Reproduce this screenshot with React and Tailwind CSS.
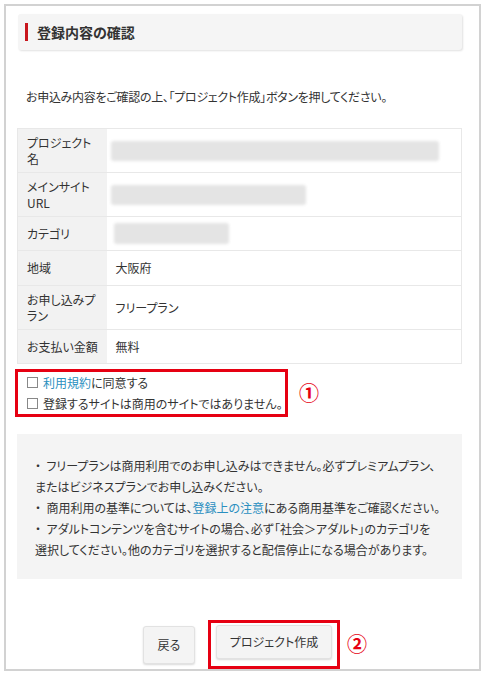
import { useState } from "react";

const rows = [
  { label: ["プロジェクト", "名"], h: "h-[44px]", blur: "w-[328px] h-[20px] -ml-[5px]" },
  { label: ["メインサイト", "URL"], h: "h-[44px]", blur: "w-[195px] h-[20px] -ml-[5px]" },
  { label: ["カテゴリ"], h: "h-[34px]", blur: "w-[115px] h-[21px] -ml-[2px]" },
  { label: ["地域"], h: "h-[35px]", value: "大阪府" },
  { label: ["お申し込みプ", "ラン"], h: "h-[44px]", value: "フリープラン" },
  { label: ["お支払い金額"], h: "h-[34px]", value: "無料" },
];

export default function App() {
  const [agree, setAgree] = useState(false);
  const [notCommercial, setNotCommercial] = useState(false);

  return (
    <div className="min-h-screen bg-white pl-[4px] pt-[4px] text-[#333] font-['Noto_Sans_CJK_JP','Noto_Sans',sans-serif] [font-feature-settings:'palt']">
      <div className="w-[477px] border-2 border-[#d2d2d2] pl-[12px] pr-[17px] pt-[8px]">
        {/* heading */}
        <div className="h-[36px] flex items-center rounded-[3px] bg-[#f5f5f5] shadow-[1px_1px_2px_rgba(0,0,0,0.12)]">
          <span className="ml-[7px] w-[3px] h-[18px] bg-[#c8161d]" />
          <h2 className="ml-[9px] text-[14px] font-bold leading-none">登録内容の確認</h2>
        </div>

        <p className="mt-[38px] text-[12px] tracking-[-0.3px] leading-[18px] pl-[8px]">
          お申込み内容をご確認の上、「プロジェクト作成」ボタンを押してください。
        </p>

        {/* summary table */}
        <table className="mt-[22px] w-[445px] ml-[-1px] border-collapse text-[12px]">
          <tbody>
            {rows.map((r) => (
              <tr key={r.label.join("")} className={`${r.h} border border-[#e8e8e8]`}>
                <td className="w-[89px] bg-[#f2f2f2] pl-[9px] whitespace-nowrap leading-[16px] align-middle">
                  {r.label.map((l, i) => (
                    <div key={i}>{l}</div>
                  ))}
                </td>
                <td className="px-[9px] align-middle">
                  {r.value ? (
                    r.value
                  ) : (
                    <div className={`${r.blur} rounded-[3px] bg-[#e4e4e4] blur-[1.5px]`} />
                  )}
                </td>
              </tr>
            ))}
          </tbody>
        </table>

        {/* agreement checks */}
        <div className="flex items-center mt-[5px] ml-[-3px]">
          <div className="w-[273px] h-[48px] border-[3px] border-[#e60012] pl-[9px] flex flex-col justify-center gap-[6px] text-[12px] leading-[15px]">
            <label className="flex items-center gap-[5px]">
              <input
                type="checkbox"
                checked={agree}
                onChange={(e) => setAgree(e.target.checked)}
                className="appearance-none w-[11px] h-[11px] border border-[#888] bg-white"
              />
              <span>
                <span className="text-[#2a8fc0]">利用規約</span>に同意する
              </span>
            </label>
            <label className="flex items-center gap-[5px]">
              <input
                type="checkbox"
                checked={notCommercial}
                onChange={(e) => setNotCommercial(e.target.checked)}
                className="appearance-none w-[11px] h-[11px] border border-[#888] bg-white"
              />
              <span>登録するサイトは商用のサイトではありません。</span>
            </label>
          </div>
          <span className="ml-[11px] text-[#e60012] text-[20px] font-bold leading-none">①</span>
        </div>

        {/* notes */}
        <div className="mt-[17px] w-[445px] ml-[-1px] bg-[#f4f4f4] pl-[18px] pr-[6px] pt-[21px] pb-[19px] text-[12px] leading-[21px] whitespace-nowrap">
          <p>
            ・&nbsp; フリープランは商用利用でのお申し込みはできません。必ずプレミアムプラン、
            <br />
            またはビジネスプランでお申し込みください。
          </p>
          <p>
            ・&nbsp; 商用利用の基準については、<span className="text-[#2a8fc0]">登録上の注意</span>にある商用基準をご確認ください。
          </p>
          <p>
            ・&nbsp; アダルトコンテンツを含むサイトの場合、必ず「社会＞アダルト」のカテゴリを
            <br />
            選択してください。他のカテゴリを選択すると配信停止になる場合があります。
          </p>
        </div>

        {/* buttons */}
        <div className="mt-[41px] flex justify-center items-center gap-[13px] pl-[3px]">
          <button className="w-[52px] h-[38px] rounded-[3px] bg-[#f4f4f4] border border-[#e2e2e2] shadow-[0_1px_2px_rgba(0,0,0,0.15)] text-[12px]">
            戻る
          </button>
          <div className="relative border-[3px] border-[#e60012] px-[5px] pt-[2px] pb-[7px]">
            <button className="w-[116px] h-[34px] rounded-[3px] bg-[#f4f4f4] border border-[#e2e2e2] shadow-[0_1px_2px_rgba(0,0,0,0.15)] text-[12px]">
              プロジェクト作成
            </button>
            <span className="absolute left-[136px] top-[11px] text-[#e60012] text-[20px] font-bold leading-none">②</span>
          </div>
        </div>
      </div>
    </div>
  );
}
